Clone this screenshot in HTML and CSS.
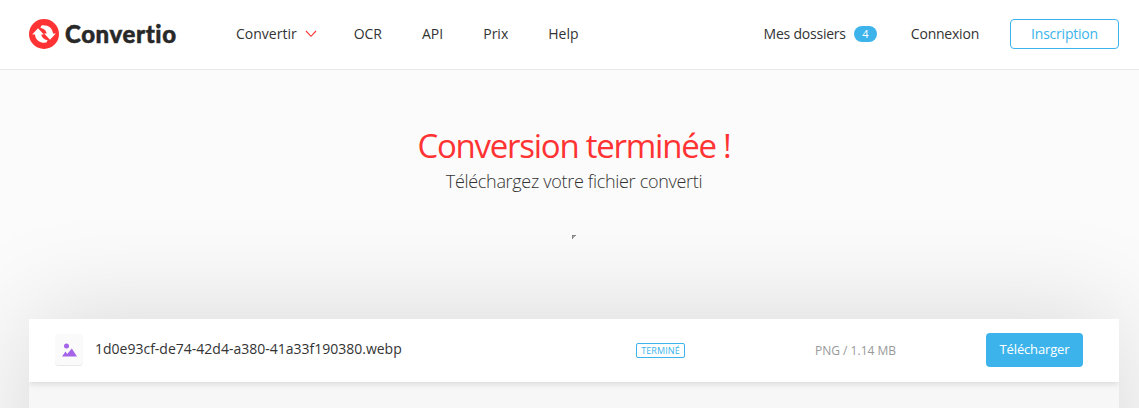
FILE: index.html
```html
<!DOCTYPE html>
<html lang="fr">
<head>
<meta charset="utf-8">
<title>Convertio</title>
<link rel="stylesheet" href="styles.css">
</head>
<body>
<header class="header">
  <a class="logo">
    <svg class="logo-mark" viewBox="0 0 30 30" width="30" height="30">
      <circle cx="15" cy="15" r="15" fill="#ff3333"/>
      <path fill="#fff" d="M9 9.3 L14.8 15.4 H12.3 C12.6 18.2 14.6 20.2 18.6 21.3 L17.5 23.6 C10.8 24.3 6.4 20.8 6 15.4 H3.2 Z"/>
      <path fill="#fff" d="M21 20.7 L15.2 14.6 H17.7 C17.4 11.8 15.4 9.8 11.4 8.7 L12.5 6.4 C19.2 5.7 23.6 9.2 24 14.6 H26.8 Z"/>
    </svg>
    <span class="logo-text">Convertio</span>
  </a>
  <nav class="nav">
    <a class="nav-link">Convertir<svg class="chevron" viewBox="0 0 12 8" width="12" height="8"><path d="M1 1 L6 6.3 L11 1" fill="none" stroke="#ff3333" stroke-width="1.1"/></svg></a>
    <a class="nav-link">OCR</a>
    <a class="nav-link">API</a>
    <a class="nav-link">Prix</a>
    <a class="nav-link">Help</a>
  </nav>
  <div class="account">
    <a class="files">Mes dossiers<span class="badge">4</span></a>
    <a class="login">Connexion</a>
    <a class="signup">Inscription</a>
  </div>
</header>
<main class="main">
  <h1 class="title">Conversion terminée !</h1>
  <p class="subtitle">Téléchargez votre fichier converti</p>
  <svg class="ad-mark" viewBox="0 0 4 4" width="4" height="4"><path d="M0 0H4V1H2V2H1V4H0Z" fill="#888"/><path d="M1 1H3V2H2V3H1Z" fill="#aaa"/></svg>
  <section class="panel">
    <div class="file-row">
      <span class="file-icon">
        <svg viewBox="0 0 15 14" width="15" height="14" fill="#a463e8"><circle cx="4.5" cy="3" r="2.5"/><path d="M0 13.5 L3.5 8.5 L5.2 11 L9.8 5.5 L15 13.5Z"/></svg>
      </span>
      <span class="file-name">1d0e93cf-de74-42d4-a380-41a33f190380.webp</span>
      <span class="status-cell"><span class="status">TERMINÉ</span></span>
      <span class="file-info">PNG / 1.14 MB</span>
      <a class="download">Télécharger</a>
    </div>
  </section>
</main>
</body>
</html>
```

FILE: styles.css
```css
* { box-sizing: border-box; }
body {
  display: flex;
  flex-direction: column;
  margin: 0;
  height: 408px;
  overflow: hidden;
  background: #fbfbfb;
  color: #333;
  font-family: "Open Sans", sans-serif;
  font-size: 14px;
  line-height: 20px;
}
.header {
  display: flex;
  flex: none;
  align-items: center;
  height: 70px;
  padding: 0 20px 2px 29px;
  background: #fff;
  border-bottom: 1px solid #e7e7e7;
}
.logo { display: flex; align-items: center; width: 207px; }
.logo-mark { flex: none; }
.logo-text {
  margin-left: 6px;
  padding-top: 1px;
  font: 900 24px/30px Lato, sans-serif;
  letter-spacing: 0.6px;
  font-variant-ligatures: none;
  color: #282828;
  -webkit-text-stroke: 0.5px #282828;
}
.nav { display: flex; gap: 40px; }
.nav-link { display: flex; align-items: center; }
.chevron { margin: 1px -3px 0 8px; }
.account {
  display: flex;
  align-items: center;
  margin-left: auto;
  letter-spacing: -0.22px;
}
.files { display: flex; align-items: center; }
.badge {
  width: 23px;
  height: 16px;
  margin-left: 8px;
  border-radius: 8px;
  background: #3cb4eb;
  color: #fff;
  font-size: 11px;
  line-height: 16px;
  text-align: center;
}
.login { margin-left: 34px; }
.signup {
  width: 109px;
  height: 30px;
  margin-left: 31px;
  border: 1px solid #3cb4eb;
  border-radius: 4px;
  color: #3cb4eb;
  line-height: 28px;
  text-align: center;
}
.main {
  display: flex;
  flex: 1;
  flex-direction: column;
  min-height: 0;
  padding: 54px 20px 0 29px;
  overflow: hidden;
}
.title {
  flex: none;
  margin: 0;
  color: #ff3333;
  font-size: 33px;
  font-weight: 400;
  line-height: 43px;
  letter-spacing: -1.25px;
  text-align: center;
}
.subtitle {
  flex: none;
  margin: 1px 0 0;
  font-size: 18px;
  font-weight: 300;
  line-height: 26px;
  letter-spacing: -0.31px;
  text-align: center;
}
.ad-mark { flex: none; margin: 41px 0 80px 543px; }
/* The panel continues below the fold, so its shadow stays even along the sides. */
.panel {
  flex: none;
  height: 310px;
  background: #f7f7f7;
  box-shadow: 0 0 100px rgba(0, 0, 0, 0.15);
}
.file-row {
  display: flex;
  align-items: center;
  height: 63px;
  padding: 0 36px 0 26px;
  background: #fff;
  box-shadow: 0 2px 6px rgba(0, 0, 0, 0.12);
  clip-path: inset(0 0 -12px);
}
.file-icon {
  display: flex;
  flex: none;
  align-items: center;
  justify-content: center;
  width: 28px;
  height: 31px;
  margin-bottom: 2px;
  border-radius: 4px;
  background: #fafafa;
  box-shadow: 0 1px 0 #e8e8e8;
}
.file-name { flex: none; width: 553px; padding: 0 0 3px 12px; }
.status-cell { display: flex; flex: none; width: 179px; }
.status {
  width: 49px;
  height: 15px;
  border: 1px solid #3cb4eb;
  border-radius: 2px;
  color: #3cb4eb;
  font-size: 9px;
  line-height: 14px;
  letter-spacing: 0.1px;
  text-align: center;
}
.file-info { color: #999; font-size: 12px; }
.download {
  width: 97px;
  height: 34px;
  margin: 0 0 2px auto;
  border-radius: 4px;
  background: #3cb4eb;
  color: #fff;
  font-size: 13px;
  line-height: 33px;
  letter-spacing: -0.15px;
  text-align: center;
}
```
